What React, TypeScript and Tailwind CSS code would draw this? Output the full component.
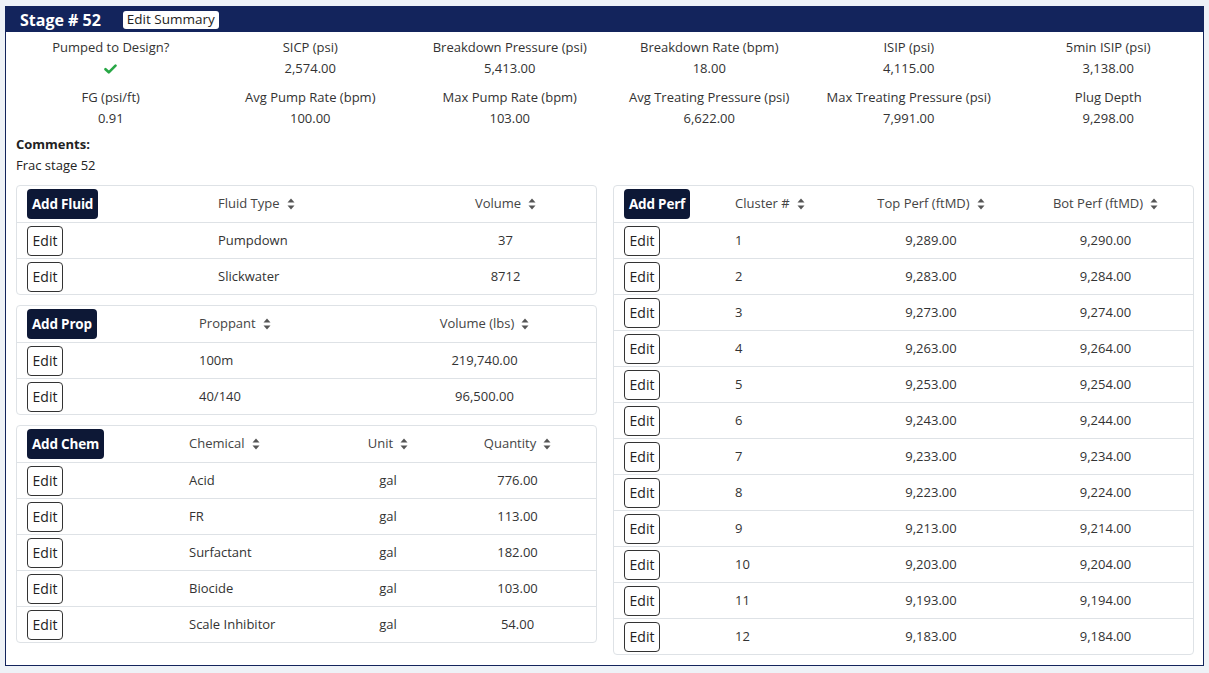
const FONT = "font-['Open_Sans','Noto_Sans',sans-serif]";

function SortIcon() {
  return (
    <svg width="8" height="12" viewBox="0 0 8 12" className="ml-[7px] inline-block shrink-0">
      <path d="M4 0.5 L7.5 4.5 H0.5Z" fill="#555" />
      <path d="M0.5 7.5 H7.5 L4 11.5Z" fill="#555" />
    </svg>
  );
}

function Check() {
  return (
    <svg width="13" height="10" viewBox="0 0 13 10">
      <path d="M1.5 5.2 L4.8 8.3 L11.5 1.6" stroke="#28a745" strokeWidth="2.6" fill="none" strokeLinecap="round" strokeLinejoin="round" />
    </svg>
  );
}

function AddButton({ label }: { label: string }) {
  return (
    <button className="h-[30px] rounded-[4px] bg-[#0d1836] px-[5px] text-[13.5px] font-bold tracking-[-0.2px] text-white">
      {label}
    </button>
  );
}

function EditButton() {
  return (
    <button className="h-[30px] w-[36px] rounded-[4px] border border-[#333] bg-white text-[14px] text-[#222]">
      Edit
    </button>
  );
}

type Col = { label: string; align: "left" | "center" };

function DataTable({
  addLabel,
  cols,
  rows,
  template,
}: {
  addLabel: string;
  cols: Col[];
  rows: string[][];
  template: string;
}) {
  return (
    <div className="overflow-hidden rounded-[4px] border border-[#dee2e6] bg-white">
      <div className={`grid h-[36px] items-center ${template}`}>
        <div className="pl-[10px]">
          <AddButton label={addLabel} />
        </div>
        {cols.map((c) => (
          <div
            key={c.label}
            className={`flex items-center text-[#444] ${c.align === "left" ? "pl-[8px]" : "justify-center"}`}
          >
            {c.label}
            <SortIcon />
          </div>
        ))}
      </div>
      {rows.map((r, i) => (
        <div key={i} className={`grid h-[36px] items-center border-t border-[#dee2e6] ${template}`}>
          <div className="pl-[10px]">
            <EditButton />
          </div>
          {r.map((v, j) => (
            <div
              key={j}
              className={`text-[#333] ${cols[j].align === "left" ? "pl-[8px]" : "text-center"}`}
            >
              {v}
            </div>
          ))}
        </div>
      ))}
    </div>
  );
}

const stats: { label: string; value: string | null }[] = [
  { label: "Pumped to Design?", value: null },
  { label: "SICP (psi)", value: "2,574.00" },
  { label: "Breakdown Pressure (psi)", value: "5,413.00" },
  { label: "Breakdown Rate (bpm)", value: "18.00" },
  { label: "ISIP (psi)", value: "4,115.00" },
  { label: "5min ISIP (psi)", value: "3,138.00" },
  { label: "FG (psi/ft)", value: "0.91" },
  { label: "Avg Pump Rate (bpm)", value: "100.00" },
  { label: "Max Pump Rate (bpm)", value: "103.00" },
  { label: "Avg Treating Pressure (psi)", value: "6,622.00" },
  { label: "Max Treating Pressure (psi)", value: "7,991.00" },
  { label: "Plug Depth", value: "9,298.00" },
];

const perfRows = Array.from({ length: 12 }, (_, i) => {
  const top = 9289 - (i === 0 ? 0 : 6 + (i - 1) * 10);
  const fmt = (n: number) => n.toLocaleString("en-US") + ".00";
  return [String(i + 1), fmt(top), fmt(top + 1)];
});

export default function App() {
  return (
    <div className={`min-h-screen bg-[#eef2f7] px-[5px] pt-[6px] text-[13px] ${FONT}`}>
      <div className="w-[1199px] border border-[#13245c] bg-white pb-[10px]">
        {/* header */}
        <div className="flex h-[25px] items-center bg-[#13245c] pl-[14px]">
          <span className="text-[16px] font-bold text-white">Stage # 52</span>
          <button className="ml-[22px] flex h-[18px] items-center rounded-[3px] bg-white px-[4px] text-[13.5px] text-[#222]">
            Edit Summary
          </button>
        </div>

        {/* summary stats */}
        <div className="ml-[5px] mt-[5px] grid w-[1197px] grid-cols-6 gap-y-[8px] leading-[21px] text-[#333]">
          {stats.map((s) => (
            <div key={s.label} className="flex flex-col items-center">
              <div>{s.label}</div>
              <div className="flex h-[21px] items-center">{s.value ?? <Check />}</div>
            </div>
          ))}
        </div>

        {/* comments */}
        <div className="mt-[5px] pl-[10px] leading-[21px] text-[#222]">
          <div className="font-bold">Comments:</div>
          <div>Frac stage 52</div>
        </div>

        {/* tables */}
        <div className="mt-[9px] grid grid-cols-[581px_581px] items-start gap-x-[16px] pl-[10px]">
          <div className="flex flex-col gap-[10px]">
            <DataTable
              addLabel="Add Fluid"
              template="grid-cols-[193px_205px_181px]"
              cols={[
                { label: "Fluid Type", align: "left" },
                { label: "Volume", align: "center" },
              ]}
              rows={[
                ["Pumpdown", "37"],
                ["Slickwater", "8712"],
              ]}
            />
            <DataTable
              addLabel="Add Prop"
              template="grid-cols-[174px_182px_223px]"
              cols={[
                { label: "Proppant", align: "left" },
                { label: "Volume (lbs)", align: "center" },
              ]}
              rows={[
                ["100m", "219,740.00"],
                ["40/140", "96,500.00"],
              ]}
            />
            <DataTable
              addLabel="Add Chem"
              template="grid-cols-[164px_156px_102px_157px]"
              cols={[
                { label: "Chemical", align: "left" },
                { label: "Unit", align: "center" },
                { label: "Quantity", align: "center" },
              ]}
              rows={[
                ["Acid", "gal", "776.00"],
                ["FR", "gal", "113.00"],
                ["Surfactant", "gal", "182.00"],
                ["Biocide", "gal", "103.00"],
                ["Scale Inhibitor", "gal", "54.00"],
              ]}
            />
          </div>
          <DataTable
            addLabel="Add Perf"
            template="grid-cols-[113px_117px_174px_175px]"
            cols={[
              { label: "Cluster #", align: "left" },
              { label: "Top Perf (ftMD)", align: "center" },
              { label: "Bot Perf (ftMD)", align: "center" },
            ]}
            rows={perfRows}
          />
        </div>
      </div>
    </div>
  );
}
